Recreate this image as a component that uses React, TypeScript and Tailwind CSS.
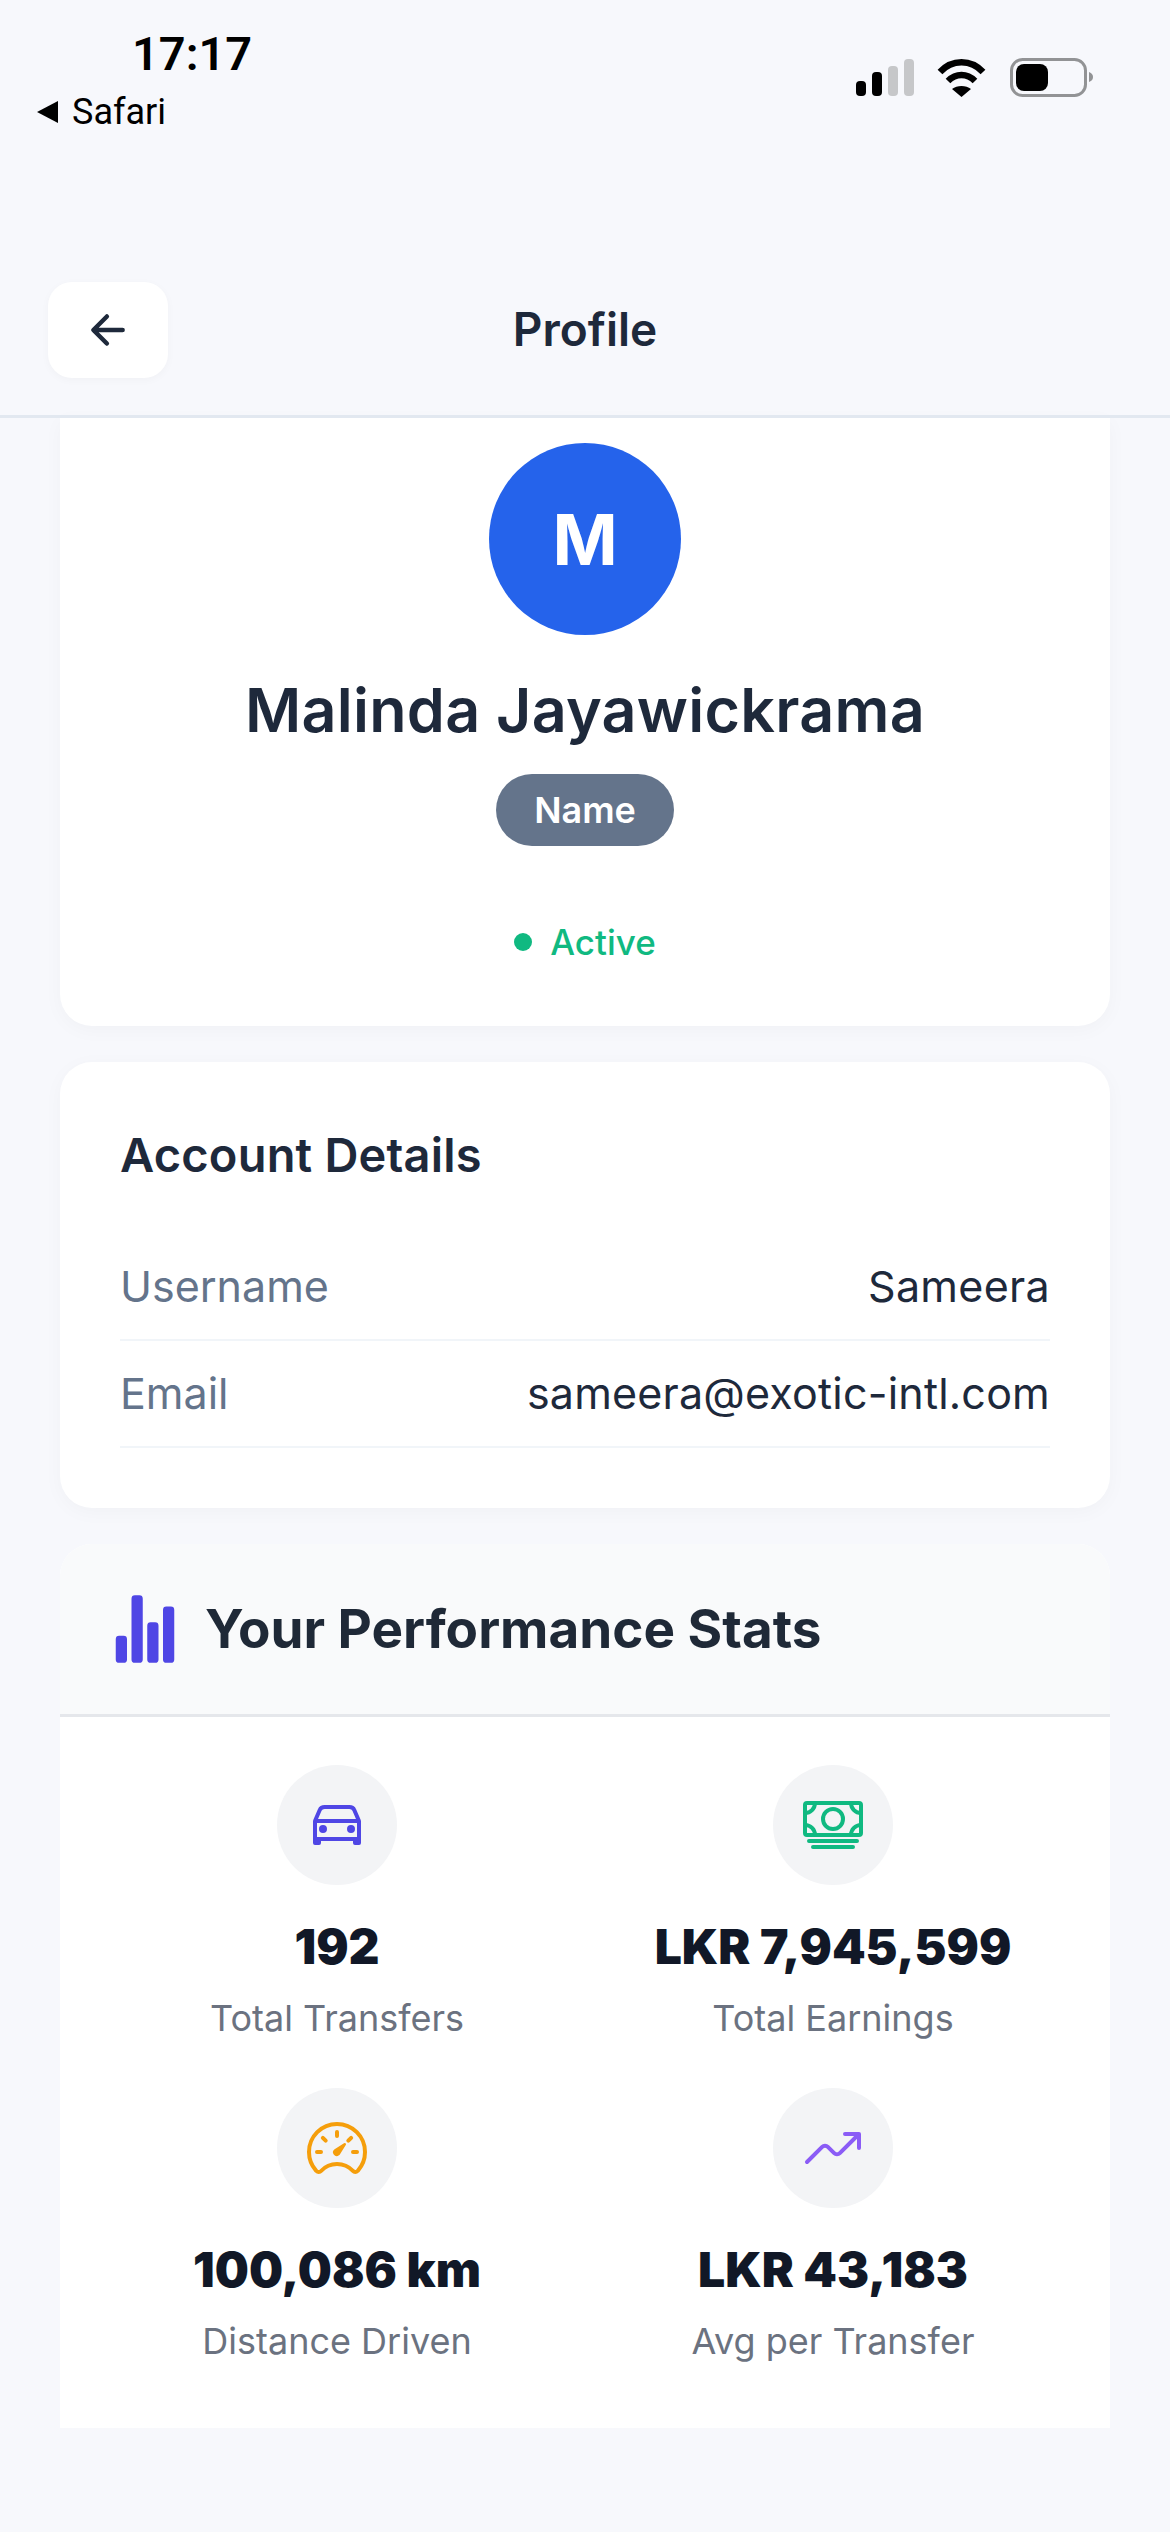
import { IoArrowBack, IoCarOutline, IoCashOutline, IoSpeedometerOutline, IoTrendingUpOutline, IoStatsChart } from 'react-icons/io5';

const sans = { fontFamily: 'Inter, "Open Sans", sans-serif' };

function StatusBar() {
  return (
    <div className="h-[130px] relative font-['Roboto',sans-serif] text-black">
      <div className="absolute left-[132px] top-[25px] text-[47px] leading-[58px] font-semibold">17:17</div>
      <div className="absolute left-[37px] top-[92px] flex items-center gap-[13px]">
        <svg width="22" height="22" viewBox="0 0 22 22"><path d="M21 0v22L0 11z" fill="#000" /></svg>
        <span className="text-[36px] leading-[40px]">Safari</span>
      </div>
      <div className="absolute left-[856px] top-[58px] flex items-center">
        <svg width="238" height="40" viewBox="0 0 238 40">
          <rect x="0" y="23" width="10" height="15" rx="4" fill="#000" />
          <rect x="16" y="14" width="10" height="24" rx="4" fill="#000" />
          <rect x="32" y="8" width="10" height="30" rx="4" fill="#c6c7c9" />
          <rect x="48" y="1" width="10" height="37" rx="4" fill="#c6c7c9" />
          <path d="M84 14C96 1 115 1 127 14" fill="none" stroke="#000" strokeWidth="6.5" />
          <path d="M92 23C100 15 111 15 119 23" fill="none" stroke="#000" strokeWidth="6.5" />
          <path d="M96 31C101 27 110 27 115 31L105.500 39z" fill="#000" />
          <rect x="155.500" y="1.500" width="74" height="36" rx="11" fill="none" stroke="#929395" strokeWidth="3" />
          <rect x="160" y="6" width="32" height="27" rx="8" fill="#000" />
          <path d="M233 14c3 1 4 3 4 5s-1 4-4 5z" fill="#929395" />
        </svg>
      </div>
    </div>
  );
}

function Stat({ icon, value, label }: { icon: React.ReactNode; value: string; label: string }) {
  return (
    <div className="flex flex-col items-center">
      <div className="w-[120px] h-[120px] rounded-full bg-[#f3f4f6] flex items-center justify-center">{icon}</div>
      <div className="mt-[32px] text-[48px] leading-[60px] font-black text-[#111827]">{value}</div>
      <div className="mt-[19px] text-[36px] leading-[44px] text-[#6b7280]">{label}</div>
    </div>
  );
}

export default function App() {
  return (
    <div style={sans} className="w-[1170px] h-[2532px] bg-[#f7f8fc] overflow-hidden">
      <StatusBar />
      <header className="h-[288px] border-b-[3px] border-[#e2e8f0] relative flex justify-center pt-[171px]">
        <button className="absolute left-[48px] top-[152px] w-[120px] h-[96px] bg-white rounded-[24px] shadow-[0_2px_8px_rgba(0,0,0,0.03)] flex items-center justify-center">
          <IoArrowBack size={48} color="#1e293b" />
        </button>
        <h1 className="text-[46px] leading-[56px] font-semibold text-[#1e293b]">Profile</h1>
      </header>

      <main className="px-[60px]">
        <section className="h-[608px] bg-white rounded-b-[32px] shadow-[0_4px_20px_rgba(0,0,0,0.03)] flex flex-col items-center pt-[25px]">
          <div className="w-[192px] h-[192px] rounded-full bg-[#2563eb] flex items-center justify-center text-white text-[70px] font-bold">M</div>
          <h2 className="mt-[39px] text-[61px] leading-[72px] font-semibold text-[#1e293b] tracking-[0.25px]">Malinda Jayawickrama</h2>
          <div className="mt-[28px] h-[72px] w-[178px] rounded-full bg-[#64748b] text-white text-[36px] font-semibold flex items-center justify-center">Name</div>
          <div className="mt-[74px] flex items-center gap-[18px] text-[#10b981] text-[35px] leading-[44px] font-medium">
            <span className="w-[18px] h-[18px] rounded-full bg-[#10b981]" />
            Active
          </div>
        </section>

        <section className="mt-[36px] h-[446px] bg-white rounded-[32px] shadow-[0_4px_20px_rgba(0,0,0,0.03)] px-[60px] pt-[65px]">
          <h3 className="text-[47px] leading-[56px] font-semibold text-[#1e293b] tracking-[0.2px]">Account Details</h3>
          <div className="mt-[51px]">
            <div className="h-[107px] flex items-center justify-between border-b-2 border-[#f1f5f9] text-[43px]">
              <span className="text-[#64748b]">Username</span>
              <span className="text-[#1e293b] tracking-[0.3px]">Sameera</span>
            </div>
            <div className="h-[107px] flex items-center justify-between border-b-2 border-[#f1f5f9] text-[43px]">
              <span className="text-[#64748b]">Email</span>
              <span className="text-[#1e293b] tracking-[0.2px]">sameera@exotic-intl.com</span>
            </div>
          </div>
        </section>

        <section className="mt-[36px] bg-white rounded-t-[32px] h-[884px]">
          <div className="h-[173px] bg-[#f9fafb] rounded-t-[32px] border-b-[3px] border-[#e5e7eb] flex items-center pl-[49px] gap-[24px]">
            <IoStatsChart size={72} color="#4f46e5" />
            <h3 className="text-[53px] leading-[60px] font-bold text-[#1f2937]">Your Performance Stats</h3>
          </div>
          <div className="grid grid-cols-2 gap-y-[48px] pt-[48px] px-[29px]">
            <Stat icon={<IoCarOutline size={64} color="#4f46e5" />} value="192" label="Total Transfers" />
            <Stat icon={<IoCashOutline size={64} color="#10b981" />} value="LKR 7,945,599" label="Total Earnings" />
            <Stat icon={<IoSpeedometerOutline size={64} color="#f59e0b" />} value="100,086 km" label="Distance Driven" />
            <Stat icon={<IoTrendingUpOutline size={64} color="#8b5cf6" />} value="LKR 43,183" label="Avg per Transfer" />
          </div>
        </section>
      </main>
    </div>
  );
}
